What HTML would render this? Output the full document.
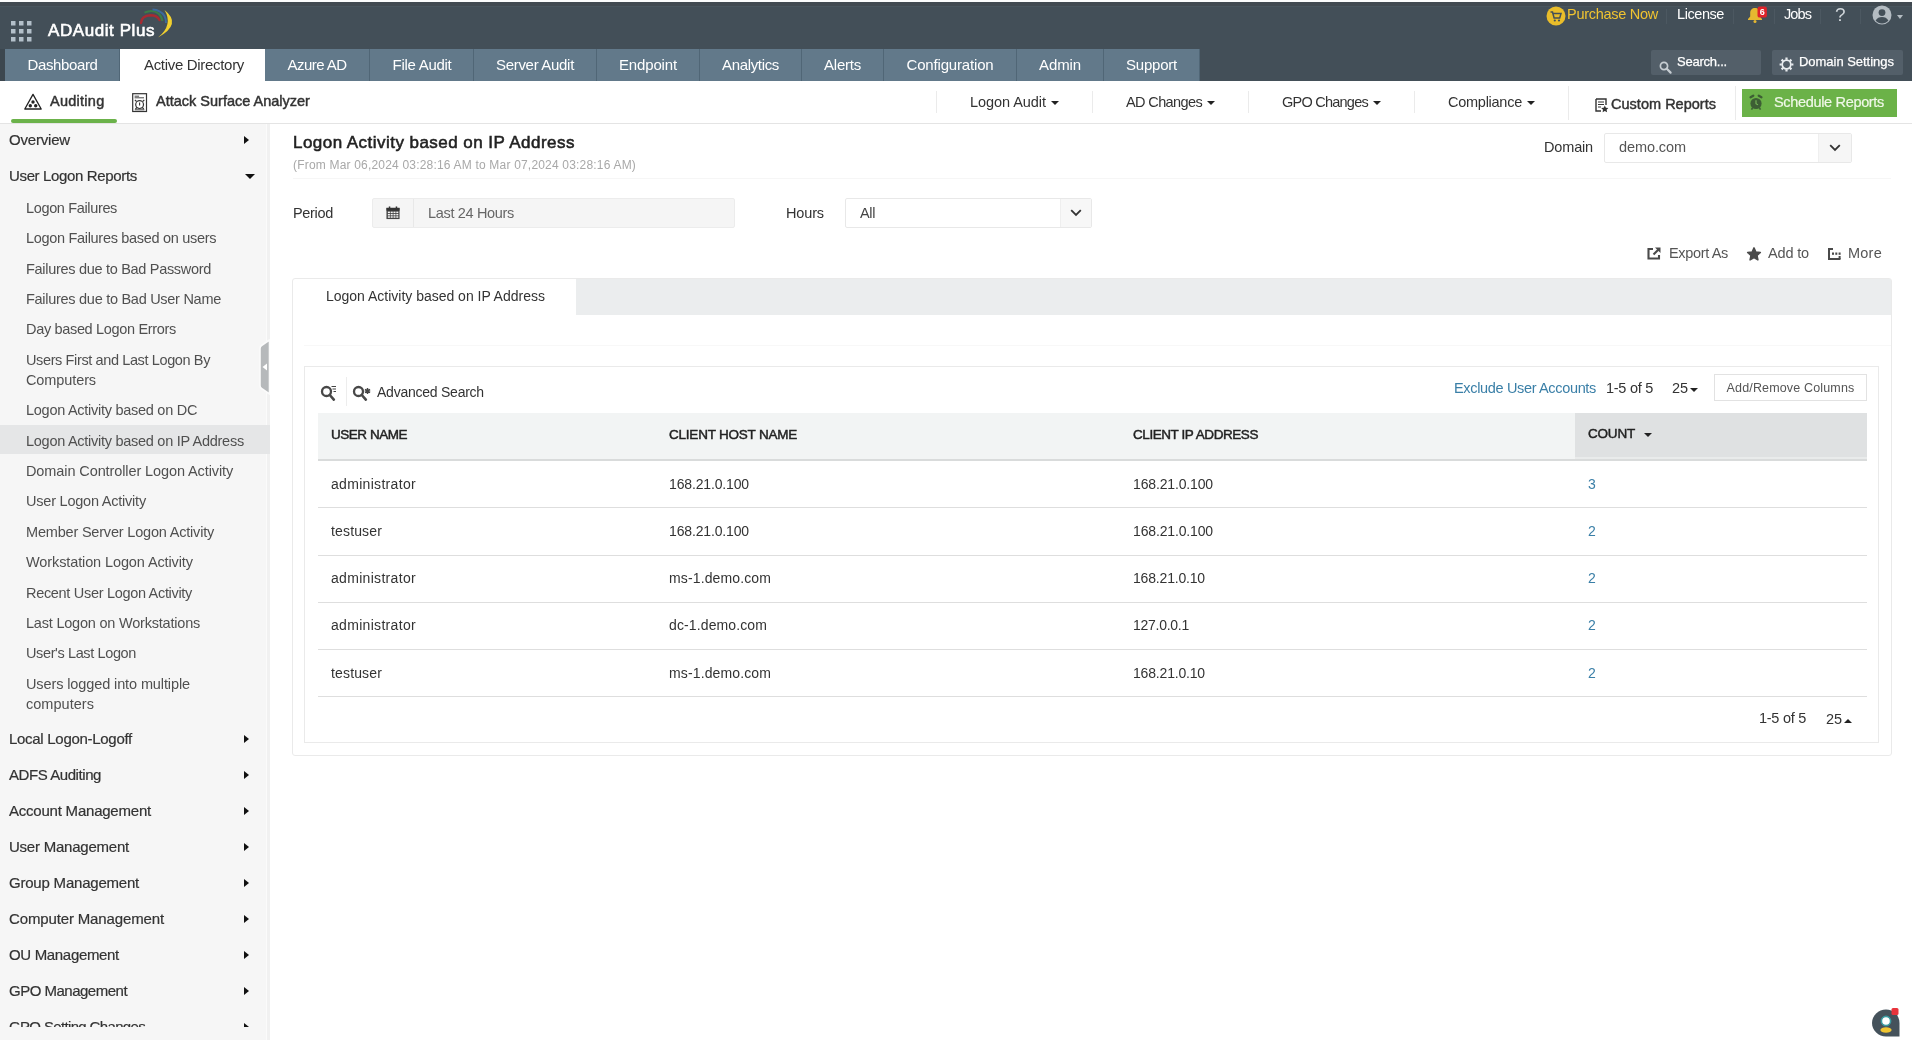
<!DOCTYPE html>
<html lang="en">
<head>
<meta charset="utf-8">
<title>ADAudit Plus - Logon Activity based on IP Address</title>
<style>
*{box-sizing:border-box;margin:0;padding:0}
html,body{width:1912px;height:1040px;overflow:hidden;background:#fff}
body{font-family:"Liberation Sans",sans-serif;font-size:14px;color:#333;position:relative}
.t{white-space:nowrap;display:inline-block}
.abs{position:absolute}
#topline,#top,#nav,#sub,#side,#main{will-change:transform}
/* ---------- top header ---------- */
#top{position:absolute;left:0;top:2px;width:1912px;height:79px;background:#434f58}
#topline{position:absolute;left:0;top:0;width:1912px;height:2px;background:#fcfdfd}
#brand{position:absolute;left:48px;top:17px;height:24px;line-height:24px;font-size:17px;font-weight:400;-webkit-text-stroke:0.600px #fff;color:#fff}
.tl{position:absolute;top:4px;height:24px;line-height:24px;font-size:14.5px;color:#fff}
.vsep{position:absolute;top:7px;width:1px;height:15px;background:#4c5861}
.hbox{position:absolute;top:48px;height:25px;background:#535f69;border-radius:2px;color:#fff;font-size:13px;line-height:25px;-webkit-text-stroke:0.250px #fff}
/* ---------- nav tabs ---------- */
#nav{position:absolute;left:0;top:49px;height:32px;width:1200px}
.tab{position:absolute;top:0;height:32px;line-height:32px;text-align:center;color:#fff;font-size:15px;background:#62798a;border-right:1px solid #506676}
.tab.on{background:#fff;color:#333;border-right:none}
/* ---------- sub nav ---------- */
#sub{position:absolute;left:0;top:81px;width:1912px;height:43px;background:#fff;border-bottom:1px solid #e4e4e4}
.sn{position:absolute;top:8px;height:24px;line-height:24px;font-size:14.5px;font-weight:400;-webkit-text-stroke:0.45px #333;color:#333}
.sm{position:absolute;top:9px;height:24px;line-height:24px;font-size:14.5px;color:#333}
.ssep{position:absolute;top:10px;width:1px;height:22px;background:#ebebeb}
.caret{display:inline-block;width:0;height:0;border-left:4.5px solid transparent;border-right:4.5px solid transparent;border-top:4.5px solid #222;vertical-align:middle;margin-left:5px;position:relative;top:0px}
/* ---------- sidebar ---------- */
#side{position:absolute;left:0;top:124px;width:270px;height:916px;background:#f6f6f6;border-right:3px solid #f1f1f1}
#sidein{position:absolute;left:0;top:0;width:270px;height:903px;overflow:hidden}
.s1{position:absolute;left:9px;height:24px;line-height:24px;font-size:15px;color:#333;-webkit-text-stroke:0.2px #333}
.s2{position:absolute;left:26px;height:20px;line-height:20px;font-size:14.5px;color:#505050}
.ar{position:absolute;left:244px;width:0;height:0;margin-top:0.5px;border-top:4.5px solid transparent;border-bottom:4.5px solid transparent;border-left:5.5px solid #111}
.ad{position:absolute;left:245px;width:0;height:0;border-left:5px solid transparent;border-right:5px solid transparent;border-top:5px solid #111}
#sel{position:absolute;left:0;top:301px;width:270px;height:29px;background:#e5e6e7}
/* ---------- main ---------- */
#main{position:absolute;left:0;top:0;width:1912px;height:1040px}
.lbl{position:absolute;height:24px;line-height:24px;font-size:14.5px;color:#333}
.box{position:absolute;border:1px solid #e8e8e8;background:#fff;border-radius:2px}
.act{position:absolute;top:241px;height:24px;line-height:24px;font-size:14.5px;color:#555}
.th{position:absolute;top:-1px;height:47px;line-height:46px;font-size:13.5px;-webkit-text-stroke:0.45px #222;color:#222}
.td{position:absolute;height:24px;line-height:24px;font-size:14px;color:#333}
.lnk{color:#3a7fa7}
.rowl{position:absolute;left:318px;width:1549px;height:1px;background:#dedede}
</style>
</head>
<body>
<div id="topline"></div>
<div id="top">
<div class="abs" style="left:0;top:0;width:1912px;height:4px;background:#414a51"></div><div class="abs" style="left:0;top:4px;width:1912px;height:1px;background:#48555d"></div><svg class="abs" style="left:11px;top:19px" width="21" height="21" viewBox="0 0 21 21"><g fill="#b3c0ca"><rect x="0" y="0" width="4.500" height="4.500"/><rect x="8" y="0" width="4.500" height="4.500"/><rect x="16" y="0" width="4.500" height="4.500"/><rect x="0" y="8" width="4.500" height="4.500"/><rect x="8" y="8" width="4.500" height="4.500"/><rect x="16" y="8" width="4.500" height="4.500"/><rect x="0" y="16" width="4.500" height="4.500"/><rect x="8" y="16" width="4.500" height="4.500"/><rect x="16" y="16" width="4.500" height="4.500"/></g></svg>
<div id="brand"><span class="t" style="letter-spacing:0.57px">ADAudit Plus</span></div>
<svg class="abs" style="left:130px;top:0px" width="60" height="45" viewBox="130 2 60 45"><path d="M141 23Q141.500 15.500 150.500 15.200Q157 15.200 159.500 20" fill="none" stroke="#b8252b" stroke-width="2.400" stroke-linecap="round" opacity="0.850"/><path d="M144.500 12.600Q152.500 8.800 158.500 13.500Q162 16.500 162.300 21" fill="none" stroke="#3a8a45" stroke-width="2" opacity="0.800"/><path d="M152.500 9.400Q160.500 9.600 164.500 16Q166.200 19.500 166 23" fill="none" stroke="#3b70ae" stroke-width="2" opacity="0.800"/><path d="M164.500 10Q182.500 24 158 37.500Q173.500 25 164.500 10z" fill="#f1d02f"/></svg>
<svg class="abs" style="left:1546px;top:4px" width="20" height="20" viewBox="0 0 20 20"><circle cx="10" cy="10" r="9.5" fill="#e9bd2a"/><path d="M4.5 6h2l1.6 6h5.6l1.3-4.4H7.4" fill="none" stroke="#434f58" stroke-width="1.5"/><circle cx="8.8" cy="14.5" r="1.1" fill="#434f58"/><circle cx="13" cy="14.5" r="1.1" fill="#434f58"/></svg>
<div class="tl" style="left:1567px;top:0px;color:#f0c330"><span class="t" style="letter-spacing:-0.27px">Purchase Now</span></div>
<div class="vsep" style="left:1666px"></div>
<div class="tl" style="left:1677px;top:0px"><span class="t" style="letter-spacing:-0.43px">License</span></div>
<div class="vsep" style="left:1733px"></div>
<svg class="abs" style="left:1746px;top:3px" width="22" height="20" viewBox="0 0 22 20"><path d="M9 3c-2.900 0-4.800 2.100-4.800 4.800v3.700l-2.200 2.400v1.100h14v-1.100l-2.200-2.400v-3.700c0-2.700-1.900-4.800-4.800-4.800z" fill="#e6b830"/><circle cx="9" cy="16.500" r="1.500" fill="#e6b830"/><rect x="11.500" y="1.600" width="9.400" height="11" rx="2.200" fill="#df2229"/><text x="16.200" y="10.300" font-family="Liberation Sans, sans-serif" font-size="9" font-weight="700" fill="#fff" text-anchor="middle">6</text></svg>
<div class="vsep" style="left:1774px"></div>
<div class="tl" style="left:1784px;top:0px"><span class="t" style="letter-spacing:-0.91px">Jobs</span></div>
<div class="vsep" style="left:1820px"></div>
<div class="tl" style="left:1835px;top:1px;font-size:19px;color:#cfd5d9"><span class="t" style="letter-spacing:-0.58px">?</span></div>
<div class="vsep" style="left:1860px"></div>
<svg class="abs" style="left:1872px;top:3px" width="20" height="20" viewBox="0 0 20 20"><circle cx="10" cy="10" r="9.500" fill="#b4bcc2"/><circle cx="10" cy="7.600" r="3.400" fill="#434f58"/><path d="M3.600 15.600c1.400-2.600 3.600-3.600 6.400-3.600s5 1 6.400 3.600c-1.600 2-4 3-6.400 3s-4.800-1-6.400-3z" fill="#434f58"/></svg>
<div class="abs" style="left:1897px;top:13px;width:0;height:0;border-left:3.500px solid transparent;border-right:3.500px solid transparent;border-top:4px solid #b4bcc2"></div>
<div class="hbox" style="left:1651px;width:110px"><svg class="abs" style="left:8px;top:11px" width="14" height="14" viewBox="0 0 14 14"><circle cx="5" cy="5" r="3.600" fill="none" stroke="#c6cdd2" stroke-width="1.700"/><path d="M7.800 7.800l3.800 3.800" stroke="#c6cdd2" stroke-width="2.200" stroke-linecap="round"/></svg><div class="abs" style="left:26px;top:-1px"><span class="t" style="letter-spacing:-0.23px">Search...</span></div></div>
<div class="hbox" style="left:1772px;width:131px"><svg class="abs" style="left:7px;top:7px" width="15" height="15" viewBox="0 0 15 15"><circle cx="7.500" cy="7.500" r="4.300" fill="none" stroke="#e8ecef" stroke-width="1.700"/><g stroke="#e8ecef" stroke-width="2.200"><path d="M7.500 0.600v2.200M7.500 12.200v2.200M0.600 7.500h2.200M12.200 7.500h2.200M2.600 2.600l1.600 1.600M10.800 10.800l1.600 1.600M2.600 12.400l1.600-1.600M10.800 4.200l1.600-1.600"/></g></svg><div class="abs" style="left:27px;top:-1px"><span class="t" style="letter-spacing:-0.03px">Domain Settings</span></div></div>
</div>
<div id="nav">
<div class="abs" style="left:0;top:0;width:5px;height:32px;background:#3c474f"></div>
<div class="tab" style="left:5px;width:115px;padding-left:1px"><span class="t" style="letter-spacing:-0.38px">Dashboard</span></div>
<div class="tab on" style="left:120px;width:145px;padding-left:3px"><span class="t" style="letter-spacing:-0.31px">Active Directory</span></div>
<div class="tab" style="left:265px;width:105px"><span class="t" style="letter-spacing:-0.55px">Azure AD</span></div>
<div class="tab" style="left:370px;width:104px;padding-left:1px"><span class="t" style="letter-spacing:-0.27px">File Audit</span></div>
<div class="tab" style="left:474px;width:123px"><span class="t" style="letter-spacing:-0.31px">Server Audit</span></div>
<div class="tab" style="left:597px;width:103px"><span class="t" style="letter-spacing:-0.15px">Endpoint</span></div>
<div class="tab" style="left:700px;width:102px"><span class="t" style="letter-spacing:-0.34px">Analytics</span></div>
<div class="tab" style="left:802px;width:82px"><span class="t" style="letter-spacing:-0.22px">Alerts</span></div>
<div class="tab" style="left:884px;width:133px"><span class="t" style="letter-spacing:-0.17px">Configuration</span></div>
<div class="tab" style="left:1017px;width:87px"><span class="t" style="letter-spacing:-0.11px">Admin</span></div>
<div class="tab" style="left:1104px;width:96px"><span class="t" style="letter-spacing:-0.22px">Support</span></div>
</div>
<div id="sub">
<svg class="abs" style="left:23px;top:11px" width="20" height="19" viewBox="0 0 20 19"><path d="M10 2.400L18.200 17H1.800z" fill="none" stroke="#222" stroke-width="1.300" stroke-linejoin="round"/><circle cx="10" cy="10" r="1.700" fill="#222"/><circle cx="7.300" cy="13.800" r="1.700" fill="#222"/><circle cx="12.700" cy="13.800" r="1.700" fill="#222"/></svg>
<div class="sn" style="left:50px"><span class="t" style="letter-spacing:0.26px">Auditing</span></div>
<div class="abs" style="left:11px;top:38px;width:106px;height:4px;background:#6bb24a;border-radius:2px"></div>
<svg class="abs" style="left:132px;top:12px" width="16" height="20" viewBox="0 0 16 20"><rect x="0.700" y="0.700" width="13.800" height="17.800" fill="none" stroke="#333" stroke-width="1.200"/><path d="M2.600 3.200h4.500M2.600 4.800h9.400M2.800 16.800h9.600" stroke="#333" stroke-width="0.900"/><circle cx="7.600" cy="11.600" r="3.900" fill="none" stroke="#333" stroke-width="1.200"/><path d="M7.600 9.600v2.800M2.900 7l1.700 1.500M12.300 7l-1.700 1.500M3.400 16l1.500-1.500M11.800 16l-1.500-1.500" stroke="#333" stroke-width="1.100"/></svg>
<div class="sn" style="left:156px"><span class="t">Attack Surface Analyzer</span></div>
<div class="ssep" style="left:936px"></div>
<div class="sm" style="left:970px"><span class="t" style="letter-spacing:-0.06px">Logon Audit</span><span class="caret"></span></div>
<div class="ssep" style="left:1092px"></div>
<div class="sm" style="left:1126px"><span class="t" style="letter-spacing:-0.62px">AD Changes</span><span class="caret"></span></div>
<div class="ssep" style="left:1248px"></div>
<div class="sm" style="left:1282px"><span class="t" style="letter-spacing:-0.76px">GPO Changes</span><span class="caret"></span></div>
<div class="ssep" style="left:1414px"></div>
<div class="sm" style="left:1448px"><span class="t" style="letter-spacing:-0.26px">Compliance</span><span class="caret"></span></div>
<div class="ssep" style="left:1568px;top:5px;height:34px"></div>
<svg class="abs" style="left:1595px;top:17px" width="14" height="15" viewBox="0 0 14 15"><path d="M1 1h10v6M1 1v12h5" fill="none" stroke="#333" stroke-width="1.400"/><path d="M3 4h6M3 6.500h6M3 9h3" stroke="#333" stroke-width="1.100"/><path d="M9.800 7.500l1.100 2.300 2.500 0.300-1.800 1.700 0.500 2.500-2.300-1.200-2.200 1.200 0.400-2.500-1.800-1.700 2.500-0.300z" fill="#333"/></svg>
<div class="sn" style="left:1611px;top:11px"><span class="t" style="letter-spacing:0.02px">Custom Reports</span></div>
<div class="ssep" style="left:1735px;top:5px;height:34px"></div>
<div class="abs" style="left:1742px;top:8px;width:155px;height:28px;background:#6bb248"></div>
<svg class="abs" style="left:1748px;top:13px" width="16" height="17" viewBox="0 0 16 17"><circle cx="8" cy="9.500" r="5.600" fill="#3d5e34"/><path d="M2.600 3.200l2.600-1.500M13.400 3.200l-2.600-1.500" stroke="#3d5e34" stroke-width="2.400" stroke-linecap="round"/><path d="M8 6.300v3.400l2 1.200" stroke="#79b95a" stroke-width="1.100" fill="none"/><path d="M4.500 14l-1 1.600M11.500 14l1 1.600" stroke="#3d5e34" stroke-width="1.600"/></svg>
<div class="sm" style="left:1774px;top:9px;color:#f0f8e8;-webkit-text-stroke:0.200px #f0f8e8"><span class="t" style="letter-spacing:-0.33px">Schedule Reports</span></div>
</div>
<div id="side"><div class="abs" style="left:266px;top:0;width:1px;height:916px;background:#fbfbfb"></div><div id="sidein">
<div id="sel"></div>
<div class="s1" style="top:4px"><span class="t" style="letter-spacing:-0.19px">Overview</span></div><div class="ar" style="top:11px"></div>
<div class="s1" style="top:40px"><span class="t" style="letter-spacing:-0.35px">User Logon Reports</span></div><div class="ad" style="top:50px"></div>
<div class="s2" style="top:74px"><span class="t" style="letter-spacing:-0.35px">Logon Failures</span></div>
<div class="s2" style="top:104px"><span class="t" style="letter-spacing:-0.31px">Logon Failures based on users</span></div>
<div class="s2" style="top:135px"><span class="t" style="letter-spacing:-0.3px">Failures due to Bad Password</span></div>
<div class="s2" style="top:165px"><span class="t" style="letter-spacing:-0.28px">Failures due to Bad User Name</span></div>
<div class="s2" style="top:195px"><span class="t" style="letter-spacing:-0.33px">Day based Logon Errors</span></div>
<div class="s2" style="top:226px"><span class="t" style="letter-spacing:-0.38px">Users First and Last Logon By</span></div>
<div class="s2" style="top:246px"><span class="t" style="letter-spacing:-0.1px">Computers</span></div>
<div class="s2" style="top:276px"><span class="t" style="letter-spacing:-0.27px">Logon Activity based on DC</span></div>
<div class="s2" style="top:307px"><span class="t" style="letter-spacing:-0.27px">Logon Activity based on IP Address</span></div>
<div class="s2" style="top:337px"><span class="t" style="letter-spacing:-0.1px">Domain Controller Logon Activity</span></div>
<div class="s2" style="top:367px"><span class="t" style="letter-spacing:-0.22px">User Logon Activity</span></div>
<div class="s2" style="top:398px"><span class="t" style="letter-spacing:-0.19px">Member Server Logon Activity</span></div>
<div class="s2" style="top:428px"><span class="t" style="letter-spacing:-0.11px">Workstation Logon Activity</span></div>
<div class="s2" style="top:459px"><span class="t" style="letter-spacing:-0.31px">Recent User Logon Activity</span></div>
<div class="s2" style="top:489px"><span class="t" style="letter-spacing:-0.21px">Last Logon on Workstations</span></div>
<div class="s2" style="top:519px"><span class="t" style="letter-spacing:-0.38px">User's Last Logon</span></div>
<div class="s2" style="top:550px"><span class="t" style="letter-spacing:-0.11px">Users logged into multiple</span></div>
<div class="s2" style="top:570px"><span class="t" style="letter-spacing:0.03px">computers</span></div>
<div class="s1" style="top:603px"><span class="t" style="letter-spacing:-0.29px">Local Logon-Logoff</span></div><div class="ar" style="top:610px"></div>
<div class="s1" style="top:639px"><span class="t" style="letter-spacing:-0.43px">ADFS Auditing</span></div><div class="ar" style="top:646px"></div>
<div class="s1" style="top:675px"><span class="t" style="letter-spacing:-0.22px">Account Management</span></div><div class="ar" style="top:682px"></div>
<div class="s1" style="top:711px"><span class="t" style="letter-spacing:-0.23px">User Management</span></div><div class="ar" style="top:718px"></div>
<div class="s1" style="top:747px"><span class="t" style="letter-spacing:-0.21px">Group Management</span></div><div class="ar" style="top:754px"></div>
<div class="s1" style="top:783px"><span class="t" style="letter-spacing:-0.14px">Computer Management</span></div><div class="ar" style="top:790px"></div>
<div class="s1" style="top:819px"><span class="t" style="letter-spacing:-0.33px">OU Management</span></div><div class="ar" style="top:826px"></div>
<div class="s1" style="top:855px"><span class="t" style="letter-spacing:-0.5px">GPO Management</span></div><div class="ar" style="top:862px"></div>
<div class="s1" style="top:891px"><span class="t" style="letter-spacing:-0.65px">GPO Setting Changes</span></div><div class="ar" style="top:898px"></div>
</div></div>
<div id="main">
<svg class="abs" style="left:258px;top:338px" width="12" height="58" viewBox="0 0 12 58"><path d="M11.500 2L3.500 7.500Q2 8.500 2 10.500V47.500Q2 49.500 3.500 50.500L11.500 56z" fill="#b6b9bb" stroke="#fbfbfb" stroke-width="1.600"/><path d="M9 25.500v7l-4.500-3.500z" fill="#fff"/></svg>
<div class="abs" style="left:293px;top:131px;height:24px;line-height:24px;font-size:17px;-webkit-text-stroke:0.55px #222;color:#222"><span class="t" style="letter-spacing:0.46px">Logon Activity based on IP Address</span></div>
<div class="abs" style="left:293px;top:155px;height:20px;line-height:20px;font-size:12px;color:#a8a8a8"><span class="t" style="letter-spacing:0.19px">(From Mar 06,2024 03:28:16 AM to Mar 07,2024 03:28:16 AM)</span></div>
<div class="lbl" style="left:1544px;top:135px"><span class="t" style="letter-spacing:-0.16px">Domain</span></div>
<div class="box" style="left:1604px;top:133px;width:248px;height:30px"><div class="abs" style="right:0;top:0;width:33px;height:28px;background:#f6f6f6;border-left:1px solid #efefef"></div><svg class="abs" style="left:224px;top:10px" width="12" height="8" viewBox="0 0 12 8"><path d="M1.200 1.200l4.800 4.800 4.800-4.800" fill="none" stroke="#333" stroke-width="1.800"/></svg><div class="abs" style="left:14px;top:1px;height:24px;line-height:24px;font-size:14.500px;color:#555"><span class="t" style="letter-spacing:-0.09px">demo.com</span></div></div>
<div class="abs" style="left:293px;top:178px;width:1598px;height:1px;background:#f6f6f6"></div>
<div class="lbl" style="left:293px;top:201px"><span class="t" style="letter-spacing:-0.32px">Period</span></div>
<div class="box" style="left:372px;top:198px;width:363px;height:30px;background:#f5f5f5;border-color:#ececec"><div class="abs" style="left:40px;top:0;width:1px;height:28px;background:#e8e8e8"></div><svg class="abs" style="left:13px;top:7px" width="14" height="14" viewBox="0 0 15 14"><rect x="0.500" y="1.500" width="14" height="12" fill="#444"/><rect x="0.500" y="1.500" width="14" height="3" fill="#333"/><g fill="#f5f5f5"><rect x="2" y="5.500" width="2.200" height="1.600"/><rect x="5" y="5.500" width="2.200" height="1.600"/><rect x="8" y="5.500" width="2.200" height="1.600"/><rect x="11" y="5.500" width="2.200" height="1.600"/><rect x="2" y="8" width="2.200" height="1.600"/><rect x="5" y="8" width="2.200" height="1.600"/><rect x="8" y="8" width="2.200" height="1.600"/><rect x="11" y="8" width="2.200" height="1.600"/><rect x="2" y="10.500" width="2.200" height="1.600"/><rect x="5" y="10.500" width="2.200" height="1.600"/><rect x="8" y="10.500" width="2.200" height="1.600"/><rect x="11" y="10.500" width="2.200" height="1.600"/></g><rect x="3" y="0" width="1.600" height="3" fill="#333"/><rect x="10.400" y="0" width="1.600" height="3" fill="#333"/></svg><div class="abs" style="left:55px;top:2px;height:24px;line-height:24px;font-size:14.500px;color:#666"><span class="t" style="letter-spacing:-0.33px">Last 24 Hours</span></div></div>
<div class="lbl" style="left:786px;top:201px"><span class="t" style="letter-spacing:-0.14px">Hours</span></div>
<div class="box" style="left:845px;top:198px;width:247px;height:30px"><div class="abs" style="left:214px;top:0px;width:31px;height:28px;background:#f7f7f7;border-left:1px solid #eee"></div><svg class="abs" style="left:224px;top:10px" width="12" height="8" viewBox="0 0 12 8"><path d="M1.200 1.200l4.800 4.800 4.800-4.800" fill="none" stroke="#333" stroke-width="1.800"/></svg><div class="abs" style="left:14px;top:2px;height:24px;line-height:24px;font-size:14.500px;color:#444"><span class="t" style="letter-spacing:-0.38px">All</span></div></div>

<svg class="abs" style="left:1647px;top:247px" width="14" height="13" viewBox="0 0 14 13"><path d="M6 2H1.500v9.500H12V8" fill="none" stroke="#4a4a4a" stroke-width="2.100"/><path d="M8 0.500h5.500v5.500z" fill="#4a4a4a"/><path d="M11.500 2.500L6.500 7.500" stroke="#4a4a4a" stroke-width="2.200"/></svg>
<div class="act" style="left:1669px"><span class="t" style="letter-spacing:-0.34px">Export As</span></div>
<svg class="abs" style="left:1746px;top:246px" width="16" height="15" viewBox="0 0 17 16"><path d="M8.500 2l2 4.400 4.800 0.500-3.600 3.200 1 4.700-4.200-2.500-4.200 2.500 1-4.700-3.600-3.200 4.800-0.500z" fill="#4a4a4a" stroke="#4a4a4a" stroke-width="1.600" stroke-linejoin="round"/></svg>
<div class="act" style="left:1768px"><span class="t" style="letter-spacing:-0.15px">Add to</span></div>
<svg class="abs" style="left:1828px;top:248px" width="13" height="12" viewBox="0 0 13 12"><path d="M1 1v10h11.500" fill="none" stroke="#4a4a4a" stroke-width="2"/><path d="M0 1h5" stroke="#4a4a4a" stroke-width="2"/><rect x="4" y="4.500" width="2" height="2.300" fill="#4a4a4a"/><rect x="7.300" y="4.500" width="2" height="2.300" fill="#4a4a4a"/><rect x="10.600" y="4.500" width="2" height="2.300" fill="#4a4a4a"/><rect x="10.600" y="8" width="2" height="3" fill="#4a4a4a"/></svg>
<div class="act" style="left:1848px"><span class="t" style="letter-spacing:0.24px">More</span></div>

<div class="abs" style="left:292px;top:278px;width:1600px;height:478px;border:1px solid #eaeaea;border-radius:3px;background:#fff"></div>
<div class="abs" style="left:576px;top:279px;width:1315px;height:36px;background:#ebedee"></div>
<div class="abs" style="left:326px;top:284px;height:24px;line-height:24px;font-size:14px;color:#333"><span class="t" style="letter-spacing:-0.01px">Logon Activity based on IP Address</span></div>
<div class="abs" style="left:304px;top:345px;width:1587px;height:1px;background:#f8f8f8"></div>
<div class="abs" style="left:304px;top:366px;width:1575px;height:377px;border:1px solid #eaeaea;background:#fff"></div>

<svg class="abs" style="left:320px;top:384px" width="17" height="17" viewBox="0 0 17 17"><circle cx="6.500" cy="7.500" r="4.500" fill="none" stroke="#484848" stroke-width="2.300"/><path d="M9.800 11l4 4.600" stroke="#484848" stroke-width="2.600" stroke-linecap="round"/><path d="M11.500 2.500h4.500M12.500 5h3.500M13.500 7.500h2.500" stroke="#444" stroke-width="1"/></svg>
<div class="abs" style="left:346px;top:377px;width:1px;height:29px;background:#ededed"></div>
<svg class="abs" style="left:352px;top:384px" width="20" height="17" viewBox="0 0 20 17"><circle cx="6.500" cy="7.500" r="4.500" fill="none" stroke="#484848" stroke-width="2.300"/><path d="M9.800 11l4 4.600" stroke="#484848" stroke-width="2.600" stroke-linecap="round"/><path d="M15.500 4v6M12.900 5.500l5.200 3M12.900 8.500l5.200-3" stroke="#444" stroke-width="1.500"/></svg>
<div class="abs" style="left:377px;top:380px;height:24px;line-height:24px;font-size:14px;color:#333"><span class="t" style="letter-spacing:-0.24px">Advanced Search</span></div>
<div class="abs lnk" style="left:1454px;top:376px;height:24px;line-height:24px;font-size:14.500px"><span class="t" style="letter-spacing:-0.34px">Exclude User Accounts</span></div>
<div class="abs" style="left:1606px;top:376px;height:24px;line-height:24px;font-size:14.500px;color:#333"><span class="t" style="letter-spacing:-0.27px">1-5 of 5</span></div>
<div class="abs" style="left:1672px;top:376px;height:24px;line-height:24px;font-size:14.500px;color:#333"><span class="t" style="letter-spacing:-0.07px">25</span></div>
<div class="abs" style="left:1690px;top:388px;width:0;height:0;border-left:4px solid transparent;border-right:4px solid transparent;border-top:4px solid #222"></div>
<div class="abs" style="left:1714px;top:374px;width:153px;height:27px;border:1px solid #e2e2e2;background:#fff;line-height:26px;font-size:12.500px;color:#555;text-align:center"><span class="t" style="letter-spacing:0.16px">Add/Remove Columns</span></div>

<div class="abs" style="left:318px;top:413px;width:1549px;height:48px;background:#f2f4f4;border-bottom:2px solid #d9dbdb">
<div class="abs" style="left:1257px;top:0;width:292px;height:46px;background:#e9ebeb"></div><div class="abs" style="left:1257px;top:0;width:292px;height:44px;background:#dfe1e2"></div>
<div class="th" style="left:13px"><span class="t" style="letter-spacing:-0.47px">USER NAME</span></div>
<div class="th" style="left:351px"><span class="t" style="letter-spacing:-0.22px">CLIENT HOST NAME</span></div>
<div class="th" style="left:815px"><span class="t" style="letter-spacing:-0.43px">CLIENT IP ADDRESS</span></div>
<div class="th" style="left:1270px;top:-2px"><span class="t" style="letter-spacing:-0.2px">COUNT</span></div>
<div class="abs" style="left:1326px;top:20px;width:0;height:0;border-left:4.500px solid transparent;border-right:4.500px solid transparent;border-top:4.500px solid #222"></div>
</div>
<div class="td" style="left:331px;top:472px"><span class="t" style="letter-spacing:0.31px">administrator</span></div><div class="td" style="left:669px;top:472px"><span class="t" style="letter-spacing:-0.15px">168.21.0.100</span></div><div class="td" style="left:1133px;top:472px"><span class="t" style="letter-spacing:-0.15px">168.21.0.100</span></div><div class="td lnk" style="left:1588px;top:472px"><span class="t" style="letter-spacing:0.2px">3</span></div><div class="rowl" style="top:507px"></div>
<div class="td" style="left:331px;top:519px"><span class="t" style="letter-spacing:0.15px">testuser</span></div><div class="td" style="left:669px;top:519px"><span class="t" style="letter-spacing:-0.15px">168.21.0.100</span></div><div class="td" style="left:1133px;top:519px"><span class="t" style="letter-spacing:-0.15px">168.21.0.100</span></div><div class="td lnk" style="left:1588px;top:519px"><span class="t" style="letter-spacing:0.2px">2</span></div><div class="rowl" style="top:555px"></div>
<div class="td" style="left:331px;top:566px"><span class="t" style="letter-spacing:0.31px">administrator</span></div><div class="td" style="left:669px;top:566px"><span class="t" style="letter-spacing:0.13px">ms-1.demo.com</span></div><div class="td" style="left:1133px;top:566px"><span class="t" style="letter-spacing:-0.18px">168.21.0.10</span></div><div class="td lnk" style="left:1588px;top:566px"><span class="t" style="letter-spacing:0.2px">2</span></div><div class="rowl" style="top:602px"></div>
<div class="td" style="left:331px;top:613px"><span class="t" style="letter-spacing:0.31px">administrator</span></div><div class="td" style="left:669px;top:613px"><span class="t" style="letter-spacing:0.12px">dc-1.demo.com</span></div><div class="td" style="left:1133px;top:613px"><span class="t" style="letter-spacing:-0.27px">127.0.0.1</span></div><div class="td lnk" style="left:1588px;top:613px"><span class="t" style="letter-spacing:0.2px">2</span></div><div class="rowl" style="top:649px"></div>
<div class="td" style="left:331px;top:661px"><span class="t" style="letter-spacing:0.15px">testuser</span></div><div class="td" style="left:669px;top:661px"><span class="t" style="letter-spacing:0.13px">ms-1.demo.com</span></div><div class="td" style="left:1133px;top:661px"><span class="t" style="letter-spacing:-0.18px">168.21.0.10</span></div><div class="td lnk" style="left:1588px;top:661px"><span class="t" style="letter-spacing:0.2px">2</span></div><div class="rowl" style="top:696px"></div>

<div class="abs" style="left:1759px;top:706px;height:24px;line-height:24px;font-size:14.500px;color:#333"><span class="t" style="letter-spacing:-0.27px">1-5 of 5</span></div>
<div class="abs" style="left:1826px;top:707px;height:24px;line-height:24px;font-size:14.500px;color:#333"><span class="t" style="letter-spacing:-0.07px">25</span></div>
<div class="abs" style="left:1844px;top:719px;width:0;height:0;border-left:4px solid transparent;border-right:4px solid transparent;border-bottom:4px solid #222"></div>
<svg class="abs" style="left:1866px;top:1004px" width="40" height="36" viewBox="0 0 40 36"><path d="M20 5.500c7.500 0 13.500 5.800 13.500 13.500v13.500H20c-7.500 0-14-6-14-13.500S12.500 5.500 20 5.500z" fill="#45525b"/><circle cx="20" cy="17" r="4.600" fill="#fff" stroke="#3a9aa0" stroke-width="1.600"/><ellipse cx="20" cy="26" rx="5.600" ry="2.800" fill="#f0c531"/><rect x="25.500" y="4" width="7" height="7" rx="1.500" fill="#e8343c"/></svg>
</div>
</body>
</html>
